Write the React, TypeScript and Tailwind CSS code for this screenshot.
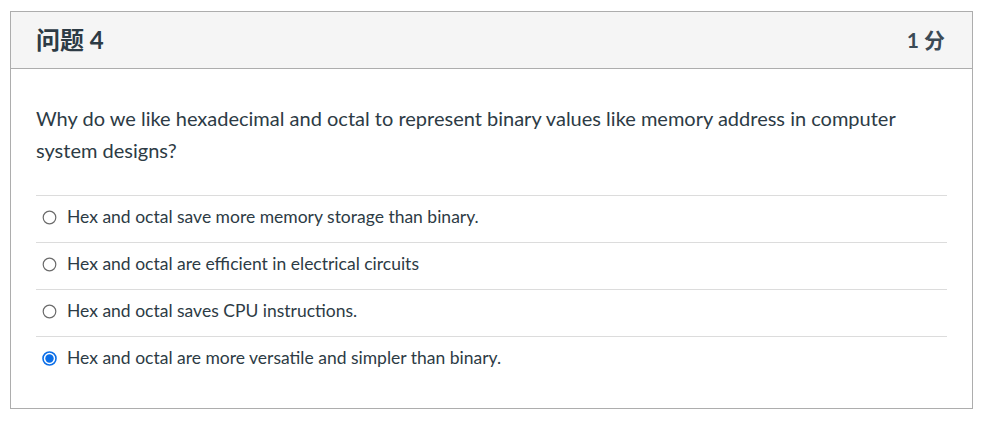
import React from "react";

const answers = [
  { text: "Hex and octal save more memory storage than binary.", checked: false },
  { text: "Hex and octal are efficient in electrical circuits", checked: false },
  { text: "Hex and octal saves CPU instructions.", checked: false },
  { text: "Hex and octal are more versatile and simpler than binary.", checked: true },
];

function Radio({ checked }: { checked: boolean }) {
  return (
    <svg width="15" height="15" viewBox="0 0 15 15" className="shrink-0">
      {checked ? (
        <>
          <circle cx="7.5" cy="7.5" r="6.5" fill="white" stroke="#0b6ee8" strokeWidth="1.6" />
          <circle cx="7.5" cy="7.5" r="4.2" fill="#0b6ee8" />
        </>
      ) : (
        <circle cx="7.5" cy="7.5" r="6.3" fill="white" stroke="#6b6b6b" strokeWidth="1.2" />
      )}
    </svg>
  );
}

export default function App() {
  return (
    <div className="w-[989px] h-[426px] bg-white pt-[11px] pl-[10px] font-['Lato','Noto_Sans_CJK_SC',sans-serif] text-[#2d3b45]">
      <div className="w-[963px] h-[398px] border border-[#adadad] flex flex-col">
        <div className="h-[57px] bg-[#f5f5f5] border-b border-[#adadad] flex items-center justify-between pl-[25px] pr-[27px]">
          <div className="text-[24px] font-bold">问题 4</div>
          <div className="text-[21px] font-bold text-[#3b4a55]">1 分</div>
        </div>
        <div className="px-[25px] pt-[33px]">
          <p className="text-[20px] leading-[32px] text-[#2d3b45]">
            Why do we like hexadecimal and octal to represent binary values like memory address in computer system designs?
          </p>
          <div className="mt-[29px]">
            {answers.map((a, i) => (
              <div key={i} className="h-[47px] border-t border-[#dcdcdc] flex items-center gap-[10px] pl-[6px] pb-[4px]">
                <Radio checked={a.checked} />
                <span className="text-[17.5px] text-[#2d3b45]">{a.text}</span>
              </div>
            ))}
          </div>
        </div>
      </div>
    </div>
  );
}
